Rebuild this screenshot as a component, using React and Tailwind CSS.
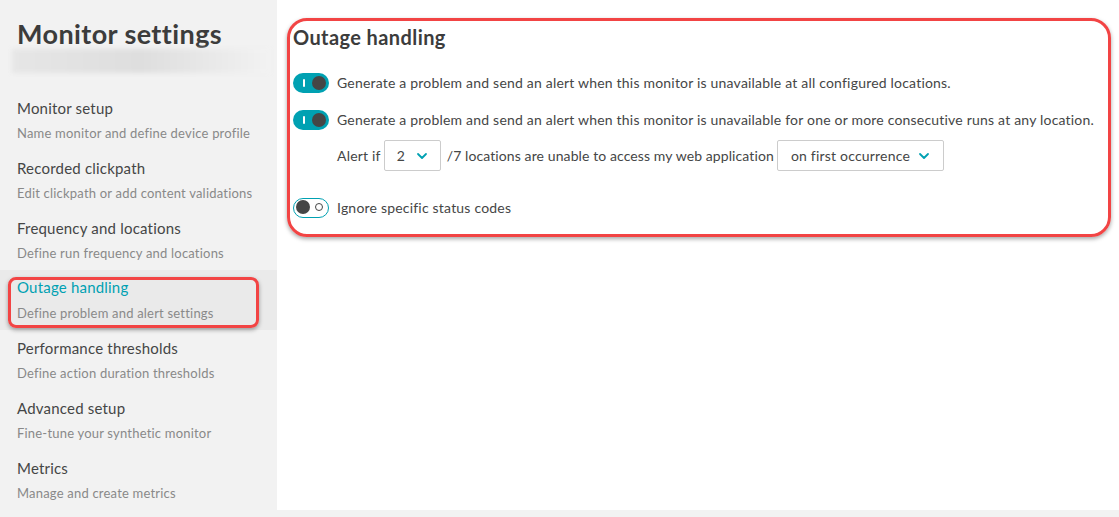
import React from "react";

const font = { fontFamily: "Lato, 'Noto Sans', sans-serif" };

function ToggleOn() {
  return (
    <div className="relative w-[36px] h-[20px] rounded-full bg-[#00a1b2] shrink-0">
      <div className="absolute left-[10px] top-[6px] w-[2px] h-[8px] bg-white rounded-sm" />
      <div className="absolute right-[3px] top-[3px] w-[14px] h-[14px] rounded-full bg-[#454646]" />
    </div>
  );
}

function ToggleOff() {
  return (
    <div className="relative w-[36px] h-[20px] rounded-full bg-white border-[1.5px] border-[#00a1b2] shrink-0">
      <div className="absolute left-[2px] top-[1.5px] w-[14px] h-[14px] rounded-full bg-[#454646]" />
      <div className="absolute right-[5px] top-[4.5px] w-[8px] h-[8px] rounded-full border-[1.5px] border-[#454646]" />
    </div>
  );
}

function Chevron() {
  return (
    <svg width="12" height="8" viewBox="0 0 12 8" fill="none">
      <path d="M2 2 L6 6 L10 2" stroke="#00a1b2" strokeWidth="1.8" strokeLinecap="round" strokeLinejoin="round" />
    </svg>
  );
}

const items = [
  ["Monitor setup", "Name monitor and define device profile"],
  ["Recorded clickpath", "Edit clickpath or add content validations"],
  ["Frequency and locations", "Define run frequency and locations"],
  ["Outage handling", "Define problem and alert settings", true],
  ["Performance thresholds", "Define action duration thresholds"],
  ["Advanced setup", "Fine-tune your synthetic monitor"],
  ["Metrics", "Manage and create metrics"],
];

export default function App() {
  return (
    <div className="w-[1119px] h-[517px] bg-[#f2f2f2] flex overflow-hidden text-[#454646] tracking-[0.2px]" style={font}>
      <aside className="w-[277px] shrink-0 flex flex-col">
        <h1 className="pl-[17px] pt-[16px] text-[27px] leading-[36px] font-bold text-[#3c3c3c] tracking-[0.4px]">Monitor settings</h1>
        <div className="ml-[12px] mr-[7px] mt-[-3px] h-[24px] bg-gradient-to-r from-[#e6e6e6] via-[#dedede] to-[#f2f2f2] blur-[2px]" />
        <nav className="mt-[17px] flex flex-col">
          {items.map(([t, s, active]) =>
            active ? (
              <div key={t} className="h-[60px] bg-[#eaeaea] pl-[8px] pr-[18px] pt-[7px]">
                <div className="h-[51px] border-[3px] border-[#f24444] rounded-[8px] shadow-[0_2px_4px_rgba(0,0,0,0.35)] pl-[6px]">
                  <div className="text-[15px] leading-[20px] mt-[-3px] text-[#00a1b2]">{t}</div>
                  <div className="text-[13px] leading-[20px] mt-[6px] text-[#898989]">{s}</div>
                </div>
              </div>
            ) : (
              <div key={t} className="h-[60px] pl-[17px] pt-[8px]">
                <div className="text-[15px] leading-[20px] text-[#454646]">{t}</div>
                <div className="text-[13px] leading-[20px] mt-[5px] text-[#898989]">{s}</div>
              </div>
            )
          )}
        </nav>
      </aside>
      <main className="flex-1 h-[510px] bg-white pl-[10px] pt-[18px] pr-[8px]">
        <section className="h-[219px] border-[3px] border-[#f24444] rounded-[20px] shadow-[0_2px_4px_rgba(0,0,0,0.35)] pl-[3px] pt-[3px]">
          <h2 className="text-[20px] leading-[26px] font-bold text-[#3c3c3c] tracking-[0.4px]">Outage handling</h2>
          <div className="mt-[22px] flex items-center gap-[8px] text-[14px]">
            <ToggleOn />
            <span>Generate a problem and send an alert when this monitor is unavailable at all configured locations.</span>
          </div>
          <div className="mt-[16px] flex items-center gap-[8px] text-[14px]">
            <ToggleOn />
            <span>Generate a problem and send an alert when this monitor is unavailable for one or more consecutive runs at any location.</span>
          </div>
          <div className="mt-[10px] ml-[44px] flex items-center text-[14px]">
            <span>Alert if</span>
            <div className="ml-[3px] w-[57px] h-[31px] border border-[#cccccc] rounded-[2px] flex items-center justify-between pl-[12px] pr-[12px]">
              <span>2</span>
              <Chevron />
            </div>
            <span className="ml-[6px] tracking-[0.1px]">/7 locations are unable to access my web application</span>
            <div className="ml-[3px] w-[167px] h-[31px] border border-[#cccccc] rounded-[2px] flex items-center justify-between pl-[13px] pr-[13px]">
              <span>on first occurrence</span>
              <Chevron />
            </div>
          </div>
          <div className="mt-[26px] flex items-center gap-[8px] text-[14px]">
            <ToggleOff />
            <span>Ignore specific status codes</span>
          </div>
        </section>
      </main>
    </div>
  );
}
